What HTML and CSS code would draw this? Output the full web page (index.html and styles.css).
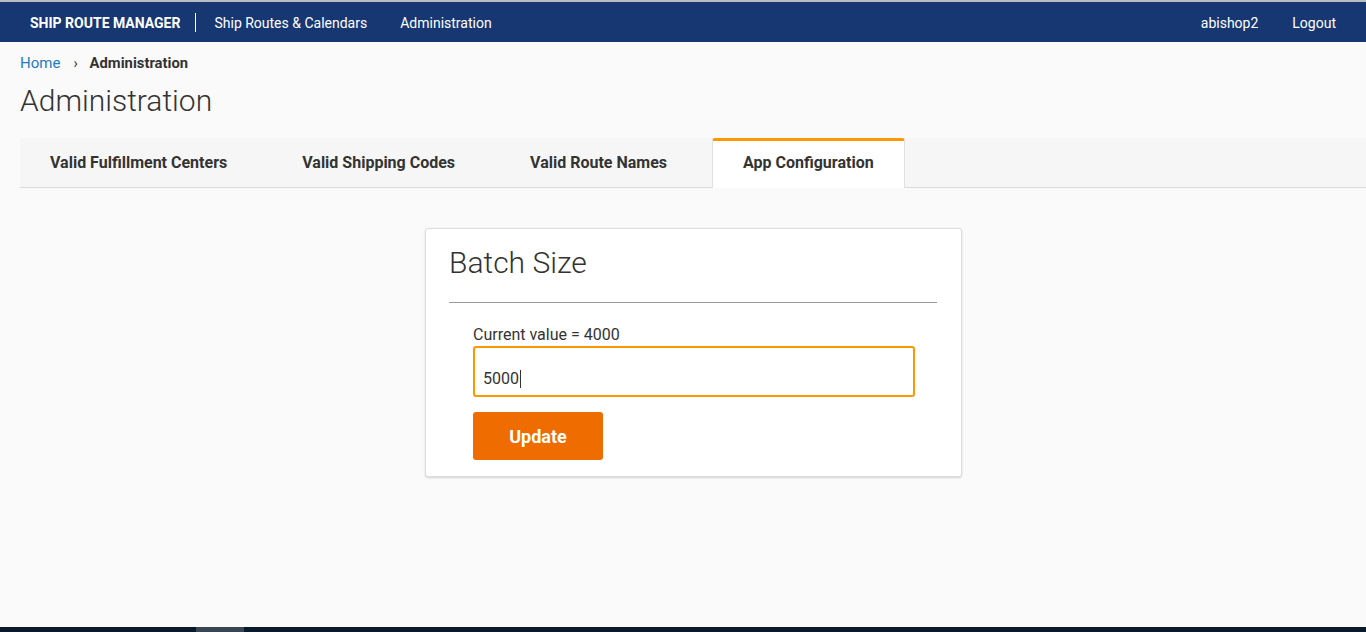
FILE: index.html
```html
<!DOCTYPE html>
<html>
<head>
<meta charset="utf-8">
<link rel="stylesheet" href="styles.css">
</head>
<body>
<div class="topline"></div>
<nav class="navbar">
  <div class="nav-left">
    <span class="brand">SHIP ROUTE MANAGER</span>
    <span class="divider"></span>
    <a class="nav-link">Ship Routes &amp; Calendars</a>
    <a class="nav-link">Administration</a>
  </div>
  <div class="nav-right">
    <a class="nav-link">abishop2</a>
    <a class="nav-link">Logout</a>
  </div>
</nav>
<main class="page">
  <div class="breadcrumb">
    <a class="crumb-link">Home</a>
    <span class="crumb-sep">›</span>
    <span class="crumb-current">Administration</span>
  </div>
  <h1 class="page-title">Administration</h1>
  <div class="tabs">
    <div class="tab">Valid Fulfillment Centers</div>
    <div class="tab">Valid Shipping Codes</div>
    <div class="tab">Valid Route Names</div>
    <div class="tab active">App Configuration</div>
  </div>
  <div class="content">
    <div class="card">
      <h2 class="card-title">Batch Size</h2>
      <hr class="card-rule">
      <div class="form">
        <label class="label">Current value = 4000</label>
        <div class="input"><span>5000</span><span class="caret"></span></div>
        <button class="btn">Update</button>
      </div>
    </div>
  </div>
</main>
<div class="taskbar"><span class="task-item"></span></div>
</body>
</html>
```
FILE: styles.css
```css
* { box-sizing: border-box; }
html, body { height: 100%; }
body {
  margin: 0;
  font-family: Roboto, "Liberation Sans", sans-serif;
  background: #fafafa;
  color: #333;
  display: flex;
  flex-direction: column;
  overflow: hidden;
}
.topline { height: 2px; background: #b9bcc2; flex: none; }
.navbar {
  flex: none;
  height: 40px;
  background: #173773;
  color: #fff;
  display: flex;
  align-items: center;
  justify-content: space-between;
  padding: 2px 30px 0 30px;
  font-size: 14px;
}
.nav-left, .nav-right { display: flex; align-items: center; }
.brand { font-weight: 700; font-size: 14px; letter-spacing: 0; }
.divider { width: 1px; height: 19px; background: #fff; margin: -2px 18px 0 15px; }
.nav-left .nav-link { margin-right: 33px; }
.nav-right .nav-link { margin-left: 34px; }
.nav-link { color: #fff; }
.page { flex: 1; padding: 0 0 0 20px; }
.breadcrumb { font-size: 15px; margin-top: 13px; display: flex; align-items: center; height: 16px; }
.crumb-link { color: #1f7ac4; }
.crumb-sep { margin: 0 12px 0 13px; font-size: 14px; color: #333; }
.crumb-current { font-weight: 700; color: #333; font-size: 14.8px; }
.page-title {
  font-weight: 300;
  font-size: 30px;
  margin: 12px 0 0 0;
  line-height: 36px;
  color: #333;
}
.tabs {
  margin-top: 19px;
  height: 50px;
  background: #f6f6f6;
  border-bottom: 1px solid #dcdcdc;
  display: flex;
  align-items: stretch;
}
.tab {
  font-size: 16px;
  font-weight: 700;
  color: #333;
  padding: 0 30px;
  margin-right: 15px;
  display: flex;
  align-items: center;
}
.tab.active {
  background: #fff;
  border-top: 3px solid #ff9800;
  border-left: 1px solid #e0e0e0;
  border-right: 1px solid #e0e0e0;
  border-radius: 3px 3px 0 0;
  margin-bottom: -1px;
  padding: 0 30px 4px 30px;
}
.content { display: flex; justify-content: center; padding-top: 40px; padding-left: 1px; }
.card {
  width: 537px;
  background: #fff;
  border: 1px solid #dcdcdc;
  border-radius: 3px;
  box-shadow: 0 1px 2px rgba(0,0,0,0.15);
  padding: 0 24px 16px 23px;
}
.card-title {
  font-weight: 300;
  font-size: 30px;
  margin: 16px 0 0 0;
  line-height: 36px;
  color: #333;
}
.card-rule { border: 0; border-top: 1px solid #999; margin: 21px 0 0 0; }
.form { padding: 22px 22px 0 24px; display: flex; flex-direction: column; align-items: flex-start; }
.label { font-size: 16px; line-height: 20px; color: #333; }
.input {
  margin-top: 1px;
  width: 442px;
  height: 51px;
  border: 2px solid #ff9800;
  border-radius: 3px;
  background: #fff;
  display: flex;
  align-items: center;
  padding: 14px 8px 0 8px;
  font-size: 16px;
  color: #333;
}
.caret { width: 1px; height: 18px; background: #333; margin-left: 1px; }
.btn {
  margin-top: 15px;
  width: 130px;
  height: 48px;
  background: #ef6c00;
  color: #fff;
  border: 0;
  border-radius: 3px;
  font-family: Roboto, "Liberation Sans", sans-serif;
  font-weight: 700;
  font-size: 18px;
}
.taskbar { flex: none; height: 5px; background: #0b1a2a; position: relative; }
.task-item { position: absolute; left: 196px; width: 48px; top: 0; bottom: 0; background: #3b4654; }
```
